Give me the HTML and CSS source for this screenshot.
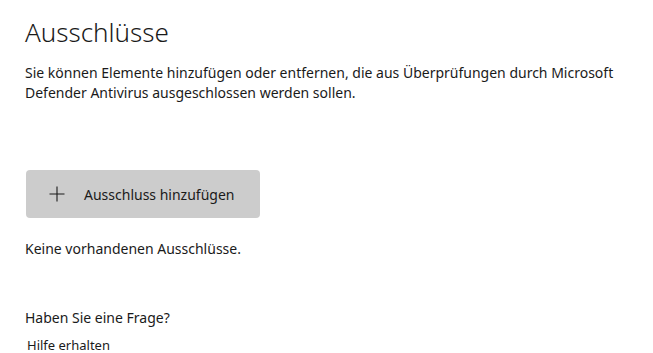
FILE: index.html
```html
<!DOCTYPE html>
<html lang="de">
<head>
<meta charset="utf-8">
<link rel="stylesheet" href="styles.css">
</head>
<body>
<main class="page">
  <h1 class="title">Ausschlüsse</h1>
  <p class="desc">Sie können Elemente hinzufügen oder entfernen, die aus Überprüfungen durch Microsoft Defender Antivirus ausgeschlossen werden sollen.</p>
  <button class="add-btn" type="button">
    <svg class="plus" width="16" height="16" viewBox="0 0 16 16" aria-hidden="true"><path d="M8 0.5V15.5M0.5 8H15.5" stroke="#1a1a1a" stroke-width="1.1" fill="none"/></svg>
    <span>Ausschluss hinzufügen</span>
  </button>
  <p class="empty">Keine vorhandenen Ausschlüsse.</p>
  <p class="question">Haben Sie eine Frage?</p>
  <a class="help" href="#">Hilfe erhalten</a>
</main>
</body>
</html>
```
FILE: styles.css
```css
html, body {
  margin: 0;
  padding: 0;
  background: #ffffff;
}
body {
  font-family: "Noto Sans", "Open Sans", sans-serif;
  color: #1a1a1a;
}
.page {
  display: flex;
  flex-direction: column;
  align-items: flex-start;
  padding: 12px 0 0 25px;
}
.title {
  margin: 0;
  font-size: 26px;
  font-weight: 300;
  line-height: 40px;
  color: #1a1a1a;
}
.desc {
  margin: 11px 0 0 0;
  width: 610px;
  font-size: 14px;
  line-height: 20px;
}
.add-btn {
  margin: 67px 0 0 1px;
  width: 234px;
  height: 48px;
  border: none;
  border-radius: 4px;
  background: #cccccc;
  display: flex;
  align-items: center;
  padding: 0 0 0 23px;
  gap: 19px;
  font-family: inherit;
  font-size: 14px;
  color: #1a1a1a;
}
.plus {
  flex: none;
}
.empty {
  margin: 21px 0 0 0;
  font-size: 14px;
  line-height: 20px;
}
.question {
  margin: 49px 0 0 0;
  font-size: 14px;
  line-height: 20px;
}
.help {
  margin: 7px 0 0 2px;
  font-size: 13px;
  line-height: 20px;
  color: #1a1a1a;
  text-decoration: none;
}
```
